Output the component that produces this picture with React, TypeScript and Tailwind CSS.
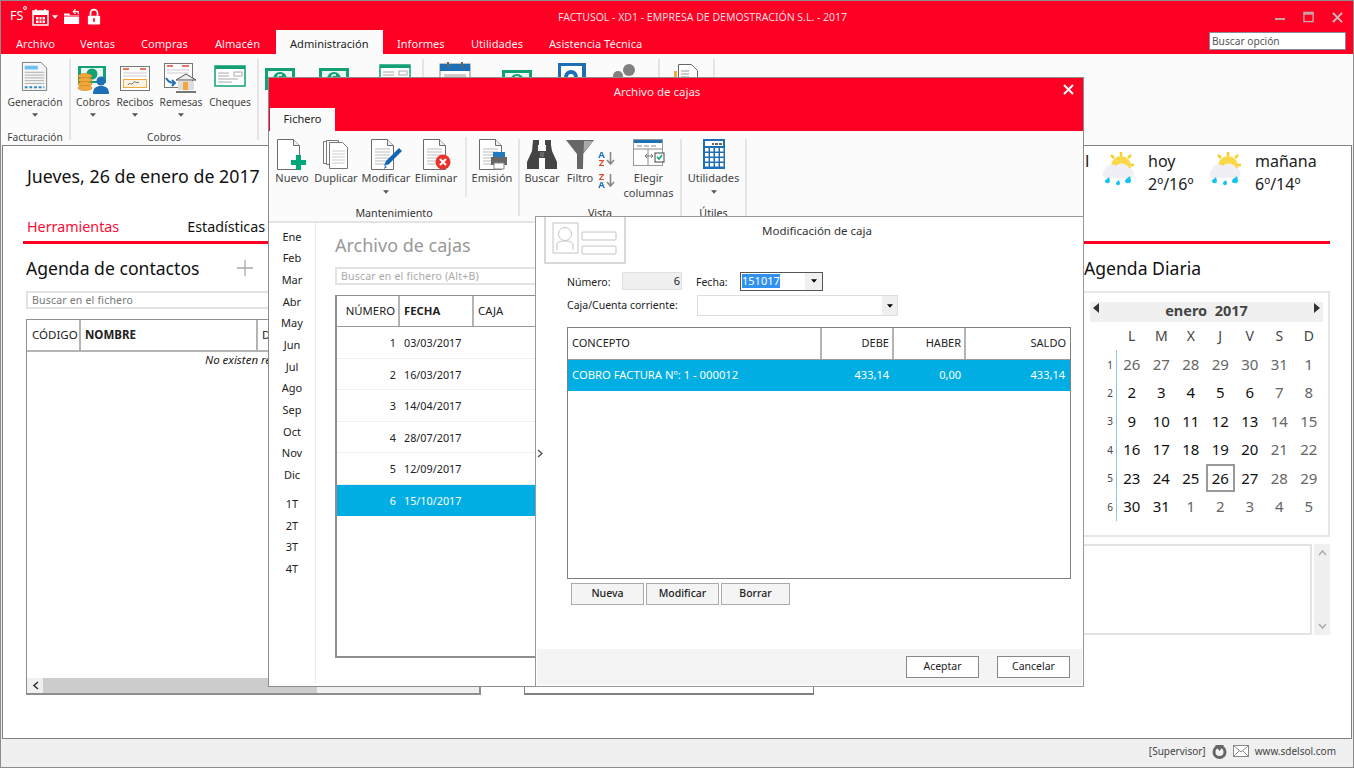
import React from "react";

const Caret = ({ className = "" }: { className?: string }) => (
  <svg width="6" height="4" viewBox="0 0 7 4" className={className}><path d="M0 0h7L3.500 4z" fill="#555" /></svg>
);

const DocBase = ({ lines = true, light = false }: { lines?: boolean; light?: boolean }) => (
  <>
    <path d="M3.500 1.500h16l6 6v24h-22z" fill="#fff" stroke="#6b6b6b" />
    <path d="M19.500 1.500v6h6" fill="#eee" stroke="#6b6b6b" />
    {lines && [11, 14, 17, 20, 23, 26].map((y) => <path key={y} d={`M7 ${y}h15`} stroke={light ? "#ddd" : "#bbb"} />)}
  </>
);

const IconNuevo = () => (
  <svg width="36" height="32" viewBox="0 0 36 32">
    <DocBase lines={false} />
    <path d="M21 17h5v5h5v5h-5v5h-5v-5h-5v-5h5z" fill="#00a878" transform="translate(1 0)" />
  </svg>
);
const IconDuplicar = () => (
  <svg width="30" height="32" viewBox="0 0 30 32">
    <path d="M2.500 3.500h12v22h-12z" fill="#fff" stroke="#777" />
    <path d="M5.500 2.500h12v24h-12z" fill="#fff" stroke="#777" />
    <path d="M8.500 4.500h13l5 5v21h-18z" fill="#fff" stroke="#777" />
    {[13, 16, 19, 22, 25].map((y) => <path key={y} d={`M11 ${y}h13`} stroke="#ccc" />)}
  </svg>
);
const IconModificar = () => (
  <svg width="36" height="32" viewBox="0 0 36 32">
    <DocBase />
    <path d="M16 28l2-5 13-13 3 3-13 13z" fill="#1565b5" />
    <path d="M16 31l1-3 2 1z" fill="#1565b5" />
  </svg>
);
const IconEliminar = () => (
  <svg width="32" height="32" viewBox="0 0 32 32">
    <DocBase />
    <circle cx="23" cy="24" r="7.500" fill="#e8342a" />
    <path d="M20 21l6 6M26 21l-6 6" stroke="#fff" strokeWidth="2" />
  </svg>
);
const IconEmision = () => (
  <svg width="32" height="32" viewBox="0 0 32 32">
    <DocBase />
    <path d="M17 14h12v5H17z" fill="#1f7ac2" />
    <path d="M15 19h16v8H15z" fill="#666" />
    <path d="M18 25h10v6H18z" fill="#fff" stroke="#888" />
  </svg>
);
const IconBinoculars = () => (
  <svg width="32" height="32" viewBox="0 0 32 32">
    <path d="M7 2h6v5h-1v6h8V7h-1V2h6v5l1 6 5 11v7H19V20h-6v11H1v-7l5-11z" fill="#444" />
    <path d="M14 14h4v5h-4z" fill="#666" />
  </svg>
);
const IconFunnel = () => (
  <svg width="30" height="32" viewBox="0 0 30 32">
    <path d="M1 2h28L18 16v15h-6V16z" fill="#666" />
    <path d="M19 3h9L18 15v15z" fill="#aaa" />
  </svg>
);
const IconColumnas = () => (
  <svg width="32" height="32" viewBox="0 0 32 32">
    <rect x="0.500" y="1.500" width="29" height="26" fill="#fff" stroke="#999" />
    <path d="M1 2h28v3H1z" fill="#1f6fb5" />
    <path d="M4 8h5M11 8h5M18 8h5M1 11h28M15 11v16" stroke="#888" />
    <path d="M12 18h8M12 18l2-2M12 18l2 2M20 18l-2-2M20 18l-2 2" stroke="#777" />
    <rect x="22" y="15" width="9" height="9" fill="#fff" stroke="#444" />
    <path d="M24 19l2 2 3-4" stroke="#00a878" strokeWidth="1.500" fill="none" />
  </svg>
);
const IconCalc = () => (
  <svg width="24" height="32" viewBox="0 0 24 32">
    <rect x="1" y="1" width="22" height="30" fill="#1f6fb5" />
    <rect x="3" y="3" width="18" height="5" fill="#fff" />
    <path d="M10 6h2M13 6h3M17 6h3" stroke="#333" strokeWidth="1.500" />
    {[10, 15, 20, 25].flatMap((y) => [3, 8, 13, 18].map((x) => <rect key={`${x}-${y}`} x={x} y={y} width="3.500" height="3.500" fill="#fff" />))}
  </svg>
);
const IconSheet = () => (
  <svg width="28" height="30" viewBox="0 0 30 32">
    <path d="M1.500 1.500h20l6 6v24h-26z" fill="#f5f5f5" stroke="#777" />
    <path d="M4 5h14v4H4z" fill="#6ec1ee" />
    {[12, 15, 18, 21, 24].map((y) => <path key={y} d={`M4 ${y}h21`} stroke="#aaa" />)}
    <path d="M4 28h21" stroke="#2b8ac6" strokeWidth="2" strokeDasharray="3 2" />
  </svg>
);
const Bill = ({ w = 30 }: { w?: number }) => (
  <svg width={w} height="24" viewBox="0 0 30 24">
    <rect x="0" y="1" width="30" height="22" fill="#12a074" />
    <path d="M3 4h24v16H3z" fill="#e8f7f1" />
    <circle cx="15" cy="12" r="7" fill="#12a074" />
    <path d="M13 8h4M13 12h4M13 16h4M13 8v8" stroke="#fff" strokeWidth="1.300" fill="none" />
  </svg>
);
const IconCobros = () => (
  <svg width="32" height="30" viewBox="0 0 32 30">
    <rect x="1" y="1" width="28" height="17" fill="#12a074" />
    <rect x="4" y="3" width="22" height="13" fill="#e8f7f1" />
    <circle cx="15" cy="9" r="5.500" fill="#12a074" />
    {[11, 15, 19, 23].map((y) => <ellipse key={y} cx="8" cy={y} rx="7" ry="2.500" fill="#f0a93a" stroke="#c9801a" strokeWidth="0.600" />)}
    <circle cx="24" cy="16" r="4.500" fill="#1e6fb8" />
    <path d="M16 29c0-6 3-8 8-8s8 2 8 8z" fill="#1e6fb8" />
  </svg>
);
const IconRecibo = () => (
  <svg width="30" height="30" viewBox="0 0 30 30">
    <rect x="0.500" y="2.500" width="29" height="24" fill="#fff" stroke="#777" />
    <path d="M3 5h6M20 5h6" stroke="#e2492d" strokeWidth="1.500" />
    <path d="M3 9h24M3 12h24" stroke="#ccc" />
    <rect x="3.500" y="15.500" width="23" height="8" fill="#fdf3e3" stroke="#f0a93a" />
    <path d="M8 21c2-4 3 1 5-2s3 1 6-1" stroke="#666" fill="none" />
  </svg>
);
const IconRemesa = () => (
  <svg width="34" height="32" viewBox="0 0 34 32">
    <rect x="0.500" y="0.500" width="28" height="24" fill="#fff" stroke="#777" />
    <path d="M3 3h6M18 3h7" stroke="#e2492d" strokeWidth="1.300" />
    <path d="M3 7h22M3 10h22" stroke="#ccc" />
    <path d="M2 15c3 5 6 5 9 5M8 17l3 3-3 3" stroke="#1e6fb8" strokeWidth="2" fill="none" />
    <path d="M12 17l10-6 10 6z" fill="#eee" stroke="#555" />
    <path d="M14 18h16v9H14z" fill="#ddd" />
    <path d="M19 19h5v8h-5z" fill="#f0a93a" />
    <path d="M12 28h20v2H12z" fill="#777" />
  </svg>
);
const IconCheque = () => (
  <svg width="32" height="24" viewBox="0 0 32 24">
    <rect x="1" y="2" width="30" height="20" fill="#fff" stroke="#12a074" strokeWidth="1.500" />
    <path d="M1 2h30v3H1z" fill="#12a074" />
    <path d="M4 9h11M4 12h11M4 15h20M4 18h14" stroke="#aaa" />
    <rect x="20" y="8" width="8" height="4" fill="#fff" stroke="#aaa" />
  </svg>
);
const IconPeekCalendar = () => (
  <svg width="32" height="30" viewBox="0 0 32 30">
    <rect x="1" y="3" width="30" height="26" fill="#fff" stroke="#888" />
    <path d="M1 3h30v7H1z" fill="#1f6fb5" />
    <path d="M9 1v5M23 1v5" stroke="#666" strokeWidth="2" />
    <path d="M5 13h22v5H5z" fill="#ccc" />
  </svg>
);
const IconSafe = () => (
  <svg width="30" height="30" viewBox="0 0 30 30">
    <rect x="1" y="0" width="28" height="28" fill="#1f6fb5" />
    <rect x="4" y="3" width="21" height="21" fill="#fff" />
    <circle cx="14" cy="14" r="7" fill="#1f6fb5" />
    <circle cx="14" cy="14" r="3" fill="#fff" />
  </svg>
);
const IconPeople = () => (
  <svg width="28" height="30" viewBox="0 0 28 30">
    <circle cx="18" cy="7" r="6" fill="#808080" />
    <circle cx="7" cy="13" r="5" fill="#808080" />
    <path d="M8 24c0-7 4-9 10-9s10 2 10 9z" fill="#808080" />
  </svg>
);
const IconPeekDoc = () => (
  <svg width="30" height="30" viewBox="0 0 30 30">
    <path d="M6.500 1.500h13l6 6v20h-19z" fill="#fff" stroke="#666" />
    <path d="M9 8h8M9 11h8M9 14h8" stroke="#999" />
    <path d="M2 8h3v12H2z" fill="#f0a93a" />
    <circle cx="26" cy="18" r="3" fill="#1f6fb5" />
  </svg>
);

const RibbonBtn = ({ w, icon, label, caret = false, second, small = false, shift = "" }: { w: number; icon?: React.ReactNode; label?: string; caret?: boolean; second?: string; small?: boolean; shift?: string }) => (
  <div className="flex flex-col items-center shrink-0" style={{ width: w }}>
    <div className="h-[36px] flex items-end justify-center"><div className={shift}>{icon}</div></div>
    {label && <span className={`leading-[15px] whitespace-nowrap text-[#444] ${small ? "mt-[4px] text-[10.200px]" : "text-[11px]"}`}>{label}</span>}
    {second && <span className="text-[11px] leading-[15px] whitespace-nowrap text-[#444]">{second}</span>}
    {caret && <Caret className={small ? "mt-[3px]" : "mt-[5px]"} />}
  </div>
);

const SortGlyph = ({ text, colors }: { text: string; colors: string }) => (
  <div className="flex items-start">
    <span className={`block w-[9px] h-[16px] text-[9.500px] leading-[8px] font-bold text-center whitespace-pre text-transparent bg-clip-text ${colors}`}>{text}</span>
    <svg width="9" height="15" viewBox="0 0 9 15"><path d="M4.500 1v12M1 9l3.500 4L8 9" stroke="#888" strokeWidth="1.600" fill="none" /></svg>
  </div>
);

const Sep = () => <div className="w-[2px] self-stretch bg-[#e4e4e4] my-[5px] shrink-0" />;

const Months = ["Ene", "Feb", "Mar", "Abr", "May", "Jun", "Jul", "Ago", "Sep", "Oct", "Nov", "Dic"];
const Quarters = ["1T", "2T", "3T", "4T"];
const Rows = [
  ["1", "03/03/2017"],
  ["2", "16/03/2017"],
  ["3", "14/04/2017"],
  ["4", "28/07/2017"],
  ["5", "12/09/2017"],
  ["6", "15/10/2017"],
];

const Weather = () => (
  <svg width="36" height="36" viewBox="0 0 36 36">
    <g stroke="#f5cf2c" strokeWidth="2.500">
      <path d="M20 1v4M10 4l3 3M30 4l-3 3M33 14h-4" />
    </g>
    <circle cx="20" cy="15" r="10" fill="#f9d94a" />
    <path d="M5 27c-4 0-5-6-1-8 1-5 7-7 11-4 3-4 11-3 13 2 6 1 6 10 1 10z" fill="#f1eff6" />
    <path d="M8 26l1 4c0 3-5 3-5 0 0-1 3-3 4-4zM18 29l1 3c0 3-4 3-4 0 0-1 2-2 3-3zM29 25l1 5c0 3-6 3-6 0 0-2 4-4 5-5z" fill="#12c4f0" />
  </svg>
);

const weeks = [
  ["1", "26", "27", "28", "29", "30", "31", "1"],
  ["2", "2", "3", "4", "5", "6", "7", "8"],
  ["3", "9", "10", "11", "12", "13", "14", "15"],
  ["4", "16", "17", "18", "19", "20", "21", "22"],
  ["5", "23", "24", "25", "26", "27", "28", "29"],
  ["6", "30", "31", "1", "2", "3", "4", "5"],
];

const isMuted = (w: number, d: number) => w === 0 ? true : w === 5 ? d > 2 : d > 5;

export default function App() {
  return (
    <div className="relative w-[1354px] h-[768px] overflow-hidden flex flex-col bg-[#f0f0f0] border border-[#8c8c8c] font-['Noto_Sans',sans-serif] text-[#222]">
      {/* Title bar */}
      <div className="h-[29px] bg-[#ff0025] flex items-center shrink-0 relative">
        <div className="flex items-center pl-[9px] pt-[2px]">
          <span className="relative text-[12.500px] text-white leading-none w-[17px]">
            FS
            <span className="absolute right-[0px] top-[-4px] w-[4px] h-[4px] rounded-full border border-white" />
          </span>
          <svg width="18" height="18" viewBox="0 0 18 18" className="ml-[5px]">
            <rect x="1" y="3" width="15" height="14" fill="none" stroke="#fff" strokeWidth="1.500" />
            <path d="M1 3h15v4H1z" fill="#fff" />
            <path d="M4 1v3M13 1v3" stroke="#fff" strokeWidth="1.500" />
            <path d="M4 9h9v6H4z" fill="#fff" />
            <path d="M7 9v6M10 9v6M4 12h9" stroke="#ff0025" />
          </svg>
          <Caret className="ml-[2px] [&_path]:fill-white" />
          <svg width="16" height="18" viewBox="0 0 18 18" className="ml-[6px]">
            <path d="M0 5h6l1 2h10v10H0z" fill="#fff" />
            <path d="M0 8h17" stroke="#ff0025" />
            <path d="M16 6V3H10M10 3l3-2.500M10 3l3 2.500" stroke="#fff" strokeWidth="1.300" fill="none" />
          </svg>
          <svg width="14" height="17" viewBox="0 0 16 18" className="ml-[7px]">
            <path d="M4 8V5a4 4 0 018 0v3" fill="none" stroke="#fff" strokeWidth="2" />
            <rect x="1" y="8" width="14" height="10" rx="1" fill="#fff" />
            <path d="M7 11h2v4H7z" fill="#ff0025" />
          </svg>
        </div>
        <span className="absolute left-[557px] top-[8px] text-[10.500px] leading-[16px] text-[#ffd9de] whitespace-nowrap">
          FACTUSOL - XD1 - EMPRESA DE DEMOSTRACIÓN S.L. - 2017
        </span>
        <div className="ml-auto flex items-center gap-[14px] pr-[10px] pt-[3px]">
          <svg width="10" height="12" viewBox="0 0 10 12" className="mr-[4px]"><path d="M0 8h10" stroke="#c8a6a8" strokeWidth="2" /></svg>
          <svg width="11" height="12" viewBox="0 0 12 12" className="mr-[4px]"><rect x="1" y="1" width="10" height="10" fill="none" stroke="#c8a6a8" strokeWidth="1.500" /><path d="M1 2.500h10" stroke="#c8a6a8" strokeWidth="2" /></svg>
          <svg width="11" height="11" viewBox="0 0 12 12"><path d="M1 1l10 10M11 1L1 11" stroke="#c8c0c0" strokeWidth="2" /></svg>
        </div>
      </div>
      {/* Tabs */}
      <div className="h-[24px] bg-[#ff0025] flex items-stretch shrink-0 pl-[1px] pr-[7px] text-[11.100px] leading-[16px] whitespace-nowrap">
        <span className="w-[64px] pl-[14px] pt-[6px] text-white/95">Archivo</span>
        <span className="w-[61px] pl-[14px] pt-[6px] text-white/95">Ventas</span>
        <span className="w-[74px] pl-[14px] pt-[6px] text-white/95">Compras</span>
        <span className="w-[75px] pl-[14px] pt-[6px] text-white/95">Almacén</span>
        <span className="w-[107px] pl-[14px] pt-[6px] bg-[#fbfbfb] text-[#222]">Administración</span>
        <span className="w-[74px] pl-[14px] pt-[6px] text-white/95">Informes</span>
        <span className="w-[78px] pl-[14px] pt-[6px] text-white/95">Utilidades</span>
        <span className="pl-[14px] pt-[6px] text-white/95">Asistencia Técnica</span>
        <div className="ml-auto mt-[2px] w-[137px] h-[18px] bg-white border border-[#889] text-[10.200px] leading-[16px] pl-[2px] text-[#555]">Buscar opción</div>
      </div>
      {/* Ribbon */}
      <div className="h-[91px] bg-[#fbfbfb] flex shrink-0">
        <div className="w-[68px] flex flex-col items-center pt-[1px] shrink-0">
          <RibbonBtn small w={64} icon={<IconSheet />} label="Generación" caret />
          <span className="mt-auto text-[10.200px] leading-[15px] text-[#444]">Facturación</span>
        </div>
        <Sep />
        <div className="w-[186px] flex flex-col pt-[1px] shrink-0">
          <div className="flex pl-[1px]">
            <RibbonBtn small w={42} icon={<IconCobros />} shift="-mb-[4px]" label="Cobros" caret />
            <RibbonBtn small w={42} icon={<IconRecibo />} shift="-mb-[3px]" label="Recibos" caret />
            <RibbonBtn small w={50} icon={<IconRemesa />} shift="-mb-[4px]" label="Remesas" caret />
            <RibbonBtn small w={48} icon={<IconCheque />} shift="mb-[3px]" label="Cheques" />
          </div>
          <span className="mt-auto text-center text-[10.200px] leading-[15px] text-[#444]">Cobros</span>
        </div>
        <Sep />
        <div className="flex pt-[1px] shrink-0 w-[163px]">
          <RibbonBtn small w={42} icon={<Bill />} />
          <RibbonBtn small w={66} icon={<Bill />} />
          <RibbonBtn small w={55} icon={<IconCheque />} shift="mb-[4px]" />
        </div>
        <Sep />
        <div className="flex pt-[1px] shrink-0 w-[234px] pl-[4px]">
          <RibbonBtn small w={54} icon={<IconPeekCalendar />} />
          <RibbonBtn small w={70} icon={<Bill />} shift="-mb-[2px]" />
          <RibbonBtn small w={40} icon={<IconSafe />} shift="-mb-[2px]" />
          <RibbonBtn small w={66} icon={<IconPeople />} shift="-mb-[2px]" />
        </div>
        <Sep />
        <div className="flex pt-[1px] shrink-0 w-[53px]">
          <RibbonBtn small w={53} icon={<IconPeekDoc />} shift="-mb-[2px]" />
        </div>
        <Sep />
      </div>
      {/* Main */}
      <div className="flex-1 mx-[1px] bg-white border border-[#808080] flex flex-col min-h-0">
        <div className="h-[62px] flex shrink-0 relative">
          <span className="ml-[24px] mt-[17px] text-[17.800px] leading-[26px] text-[#111] whitespace-nowrap">Jueves, 26 de enero de 2017</span>
          <div className="ml-auto flex mr-[22px] mt-[5px]">
            <span className="text-[17px] leading-[22px] w-[16px] -mt-[1px]">l</span>
            <Weather />
            <div className="ml-[11px] w-[60px] text-[16px] leading-[23px] -mt-[2px] pt-[1px]">hoy<br />2º/16º</div>
            <Weather />
            <div className="ml-[11px] w-[74px] text-[16px] leading-[23px] -mt-[2px] pt-[1px]">mañana<br />6º/14º</div>
          </div>
        </div>
        <div className="ml-[20px] mr-[21px] h-[36px] border-b-[3px] border-[#ff0025] flex items-end pb-[4px] shrink-0">
          <span className="ml-[4px] text-[14.300px] leading-[20px] text-[#ff0a33]">Herramientas</span>
          <span className="ml-[68px] text-[14.300px] leading-[20px] text-[#111]">Estadísticas</span>
        </div>
        <div className="flex flex-1 min-h-0">
          {/* Left */}
          <div className="ml-[23px] w-[455px] flex flex-col shrink-0">
            <div className="h-[47px] flex items-center pt-[1px]">
              <span className="text-[17.600px] leading-[26px] text-[#111]">Agenda de contactos</span>
              <svg width="16" height="16" viewBox="0 0 16 16" className="ml-[37px]"><path d="M8 0v16M0 8h16" stroke="#aaa" strokeWidth="1.300" /></svg>
            </div>
            <div className="h-[18px] border-2 border-[#e3e3e3] w-[250px] text-[10.500px] leading-[14px] pl-[4px] text-[#777] tracking-[0.2px]">Buscar en el fichero</div>
            <div className="mt-[10px] h-[376px] border-2 border-[#8e8e8e] border-t border-l flex flex-col">
              <div className="h-[32px] border-b-2 border-[#b4b4b4] flex shrink-0 text-[11.500px]">
                <span className="w-[54px] border-r-2 border-[#b4b4b4] flex items-center pl-[5px]">CÓDIGO</span>
                <span className="w-[177px] border-r-2 border-[#b4b4b4] flex items-center pl-[4px] font-bold">NOMBRE</span>
                <span className="flex items-center pl-[4px]">D</span>
              </div>
              <div className="flex-1 text-[11.500px] italic leading-[16px] pl-[178px]">No existen re</div>
              <div className="h-[15px] bg-[#f0f0f0] flex items-center shrink-0">
                <div className="w-[16px] flex justify-center"><svg width="7" height="9" viewBox="0 0 7 9"><path d="M6 1L2 4.500 6 8" stroke="#333" strokeWidth="1.600" fill="none" /></svg></div>
                <div className="w-[274px] h-full bg-[#cccccc]" />
              </div>
            </div>
          </div>
          {/* Middle */}
          <div className="ml-[43px] w-[290px] shrink-0 flex flex-col">
            <div className="mt-[75px] h-[376px] border border-[#808080] border-b-2" />
          </div>
          {/* Right */}
          <div className="ml-[270px] w-[246px] shrink-0 flex flex-col">
            <div className="h-[47px] flex items-center pt-[1px] text-[17.600px] leading-[26px] text-[#111]">Agenda Diaria</div>
            <div className="h-[246px] border-2 border-l-0 border-[#e6e6e6] pt-[9px] pl-[6px] pr-[5px]">
              <div className="h-[20px] bg-[#f0f0f0] flex justify-between px-[3px] w-full">
                <svg width="7" height="10" viewBox="0 0 7 10" className="mt-[1px]"><path d="M6 0v10L0 5z" fill="#333" /></svg>
                <span className="text-[14.500px] font-bold text-[#444] leading-[17px]">enero&nbsp;&nbsp;2017</span>
                <svg width="7" height="10" viewBox="0 0 7 10" className="mt-[1px]"><path d="M1 0v10l6-5z" fill="#333" /></svg>
              </div>
              <div className="ml-[1px] grid grid-cols-[26px_repeat(7,29.500px)] auto-rows-[28.400px] items-center text-center text-[15px] leading-none">
                <span />
                {["L", "M", "X", "J", "V", "S", "D"].map((d) => <span key={d} className="text-[14px] text-[#444]">{d}</span>)}
                {weeks.map((week, w) =>
                  week.map((v, d) => {
                    if (d === 0) return <span key={`w${w}`} className="h-full flex items-center justify-end pr-[3px] text-[10px] text-[#444] border-r border-[#8cc4f0]">{v}</span>;
                    const today = w === 4 && d === 4;
                    return (
                      <span key={`${w}-${d}`} className={`h-full flex items-center justify-center ${isMuted(w, d) ? "text-[#666]" : "text-[#111]"} ${today ? "border-2 border-[#999]" : ""}`}>{v}</span>
                    );
                  })
                )}
              </div>
            </div>
            <div className="mt-[7px] flex h-[91px] gap-[2px]">
              <div className="flex-1 border-2 border-l-0 border-[#e3e3e3]" />
              <div className="w-[16px] bg-[#f0f0f0] flex flex-col items-center justify-between py-[6px]">
                <svg width="9" height="6" viewBox="0 0 9 6"><path d="M1 5l3.500-4L8 5" stroke="#aaa" strokeWidth="1.500" fill="none" /></svg>
                <svg width="9" height="6" viewBox="0 0 9 6"><path d="M1 1l3.500 4L8 1" stroke="#aaa" strokeWidth="1.500" fill="none" /></svg>
              </div>
            </div>
          </div>
        </div>
      </div>
      {/* Status */}
      <div className="h-[28px] shrink-0 flex items-center justify-end pr-[17px] pb-[4px] text-[10px] text-[#444] gap-[6px]">
        <span>[Supervisor]</span>
        <svg width="15" height="15" viewBox="0 0 15 15"><circle cx="7.500" cy="8" r="5.500" fill="none" stroke="#666" strokeWidth="3" /><path d="M3 1h9L7.500 7z" fill="#666" /></svg>
        <svg width="16" height="12" viewBox="0 0 16 12"><rect x="0.500" y="0.500" width="15" height="11" fill="#fff" stroke="#888" /><path d="M0.500 0.500L8 7l7.500-6.500M0.500 11.500L6 6M15.500 11.500L10 6" stroke="#888" fill="none" /></svg>
        <span>www.sdelsol.com</span>
      </div>

      {/* Archivo de cajas window */}
      <div className="absolute left-[267px] top-[76px] w-[816px] h-[610px] bg-white border border-[#8c8c8c] flex flex-col">
        <div className="h-[53px] bg-[#ff0025] relative shrink-0 flex items-end pl-[1px]">
          <span className="absolute left-0 right-0 top-[6px] text-center text-[11.500px] leading-[16px] text-[#ffe6e9] pr-[38px]">Archivo de cajas</span>
          <svg width="11" height="11" viewBox="0 0 11 11" className="absolute right-[9px] top-[6px]"><path d="M1 1l9 9M10 1l-9 9" stroke="#fff" strokeWidth="2" /></svg>
          <span className="w-[65px] h-[23px] bg-[#fbfbfb] flex items-center justify-center pb-[2px] text-[11px] leading-none text-[#222]">Fichero</span>
        </div>
        <div className="h-[92px] bg-[#fbfbfb] border-b-2 border-[#e4e4e4] flex shrink-0 pl-[1px] pt-[3px]">
          <div className="w-[248px] flex flex-col shrink-0">
            <div className="flex pl-[2px]">
              <RibbonBtn w={40} icon={<IconNuevo />} label="Nuevo" />
              <RibbonBtn w={48} icon={<IconDuplicar />} label="Duplicar" />
              <RibbonBtn w={52} icon={<IconModificar />} label="Modificar" caret />
              <RibbonBtn w={48} icon={<IconEliminar />} label="Eliminar" />
              <div className="w-[2px] h-[60px] mt-[3px] ml-[5px] bg-[#e8e8e8] shrink-0" />
              <RibbonBtn w={50} icon={<IconEmision />} label="Emisión" />
            </div>
            <span className="mt-auto text-center text-[10.700px] leading-[15px] text-[#333]">Mantenimiento</span>
          </div>
          <Sep />
          <div className="w-[160px] flex flex-col shrink-0">
            <div className="flex pl-[1px]">
              <RibbonBtn w={42} icon={<IconBinoculars />} label="Buscar" />
              <RibbonBtn w={34} icon={<IconFunnel />} label="Filtro" />
              <div className="w-[20px] flex flex-col shrink-0 pt-[17px]">
                <SortGlyph text={"A\nZ"} colors="bg-[linear-gradient(#1f6fb5_50%,#e2492d_50%)]" />
                <div className="h-[6px]" />
                <SortGlyph text={"Z\nA"} colors="bg-[linear-gradient(#e2492d_50%,#1f6fb5_50%)]" />
              </div>
              <RibbonBtn w={63} icon={<IconColumnas />} label="Elegir" second="columnas" />
            </div>
            <span className="mt-auto text-center text-[10.700px] leading-[15px] text-[#333]">Vista</span>
          </div>
          <Sep />
          <div className="w-[63px] flex flex-col shrink-0">
            <RibbonBtn w={63} icon={<IconCalc />} label="Utilidades" caret />
            <span className="mt-auto text-center text-[10.700px] leading-[15px] text-[#333]">Útiles</span>
          </div>
          <Sep />
        </div>
        <div className="flex flex-1 min-h-0">
          <div className="w-[47px] border-r border-[#e8e8e8] flex flex-col items-center pt-[3px] mb-[3px] text-[11px] text-[#222] shrink-0">
            {Months.map((m) => <span key={m} className="h-[21.700px] flex items-center">{m}</span>)}
            <div className="h-[7px]" />
            {Quarters.map((m) => <span key={m} className="h-[21.700px] flex items-center">{m}</span>)}
          </div>
          <div className="flex-1 pl-[19px] flex flex-col">
            <span className="mt-[10px] text-[18px] leading-[24px] text-[#999]">Archivo de cajas</span>
            <div className="mt-[10px] w-[210px] h-[18px] border-2 border-[#e3e3e3] text-[10.500px] leading-[15px] pl-[4px] text-[#aaa] tracking-[0.2px]">Buscar en el fichero (Alt+B)</div>
            <div className="mt-[10px] w-[210px] h-[363px] border-2 border-[#8e8e8e] border-t border-r-0 flex flex-col">
              <div className="h-[31px] border-b border-[#999] flex shrink-0 text-[11.300px]">
                <span className="w-[63px] border-r-2 border-[#b4b4b4] flex items-center justify-end pr-[3px] pt-[1px]">NÚMERO</span>
                <span className="w-[74px] border-r-2 border-[#b4b4b4] flex items-center pl-[4px] pt-[1px] font-bold">FECHA</span>
                <span className="flex items-center pl-[4px] pt-[1px]">CAJA</span>
              </div>
              {Rows.map(([n, d], i) => (
                <div key={n} className={`h-[31.500px] flex items-center pt-[2px] text-[10.800px] shrink-0 ${i === 5 ? "bg-[#00aee3] text-white" : "border-b border-[#f0f0f0]"}`}>
                  <span className="w-[59px] text-right">{n}</span>
                  <span className="ml-[8px]">{d}</span>
                </div>
              ))}
            </div>
          </div>
        </div>
      </div>

      {/* Modificación de caja dialog */}
      <div className="absolute left-[534px] top-[215px] w-[549px] h-[471px] bg-white border border-[#999] flex flex-col">
        <svg width="83" height="48" viewBox="0 0 83 48" className="absolute left-[8px] top-[0px]">
          <path d="M1 0v46h80V0" fill="#fff" stroke="#ccc" strokeWidth="1.500" />
          <path d="M9 6h25v30H9z" fill="none" stroke="#c4c4c4" />
          <circle cx="21" cy="17" r="6.500" fill="none" stroke="#c4c4c4" />
          <path d="M13 33v-5c0-3 3-4 8-4s8 1 8 4v5" fill="none" stroke="#c4c4c4" />
          <rect x="38" y="15" width="34" height="8" rx="1" fill="none" stroke="#c4c4c4" />
          <rect x="38" y="29" width="34" height="8" rx="1" fill="none" stroke="#c4c4c4" />
        </svg>
        <svg width="6" height="9" viewBox="0 0 6 9" className="absolute left-[1px] top-[232px]"><path d="M1 1l4 3.500L1 8" stroke="#555" strokeWidth="1.500" fill="none" /></svg>
        <div className="h-[28px] flex items-center justify-center pl-[15px] text-[11.500px] text-[#333] shrink-0">Modificación de caja</div>
        <div className="ml-[31px] mt-[27px] flex items-center h-[18px] text-[10.500px] text-[#222] shrink-0">
          <span className="w-[55px] pt-[3px]">Número:</span>
          <div className="w-[60px] h-[18px] bg-[#f0f0f0] border border-[#e0e0e0] text-right pr-[1px] text-[11px] leading-[15px]">6</div>
          <span className="ml-[14px] w-[44px] pt-[3px]">Fecha:</span>
          <div className="w-[83px] h-[19px] border border-[#555] flex items-center pl-[1px] pr-0">
            <span className="bg-[#2f92f0] text-white text-[11px] leading-[14px]">151017</span>
            <div className="ml-auto w-[17px] h-full bg-[#f0f0f0] flex items-center justify-center"><Caret className="[&_path]:fill-black" /></div>
          </div>
        </div>
        <div className="ml-[31px] mt-[5px] flex items-center h-[21px] text-[10.500px] text-[#222] shrink-0">
          <span className="w-[130px]">Caja/Cuenta corriente:</span>
          <div className="w-[201px] h-[21px] border border-[#ddd] flex justify-end">
            <div className="w-[15px] h-full bg-[#f0f0f0] flex items-center justify-center"><Caret className="[&_path]:fill-black" /></div>
          </div>
        </div>
        <div className="ml-[31px] mt-[11px] w-[504px] h-[252px] border border-[#808080] flex flex-col shrink-0">
          <div className="h-[32px] border-b border-[#999] flex text-[11px] text-[#222] shrink-0">
            <span className="w-[254px] border-r-2 border-[#b4b4b4] flex items-center pl-[4px]">CONCEPTO</span>
            <span className="w-[72px] border-r-2 border-[#b4b4b4] flex items-center justify-end pr-[3px]">DEBE</span>
            <span className="w-[72px] border-r-2 border-[#b4b4b4] flex items-center justify-end pr-[3px]">HABER</span>
            <span className="flex-1 flex items-center justify-end pr-[4px]">SALDO</span>
          </div>
          <div className="h-[31px] bg-[#00aee3] text-white flex items-center text-[11.250px] shrink-0">
            <span className="w-[254px] pl-[4px]">COBRO FACTURA Nº: 1 - 000012</span>
            <span className="w-[72px] text-right pr-[5px] text-[11px]">433,14</span>
            <span className="w-[72px] text-right pr-[5px] text-[11px]">0,00</span>
            <span className="flex-1 text-right pr-[5px] text-[11px]">433,14</span>
          </div>
        </div>
        <div className="ml-[35px] mt-[4px] flex gap-[2px] shrink-0">
          {[["Nueva", "w-[73px]"], ["Modificar", "w-[73px]"], ["Borrar", "w-[69px]"]].map(([t, w]) => (
            <div key={t} className={`${w} h-[22px] bg-[#f4f4f4] border border-[#aaa] flex items-center justify-center text-[10.500px] font-medium text-[#222]`}>{t}</div>
          ))}
        </div>
        <div className="mt-auto mb-[1px] ml-[1px] mr-[1px] h-[36px] bg-[#f4f4f4] flex items-center justify-end pr-[12px] gap-[18px] shrink-0">
          <div className="w-[73px] h-[22px] bg-white border border-[#888] flex items-center justify-center text-[10.500px] text-[#222]">Aceptar</div>
          <div className="w-[73px] h-[22px] bg-white border border-[#888] flex items-center justify-center text-[10.500px] text-[#222]">Cancelar</div>
        </div>
      </div>
    </div>
  );
}
